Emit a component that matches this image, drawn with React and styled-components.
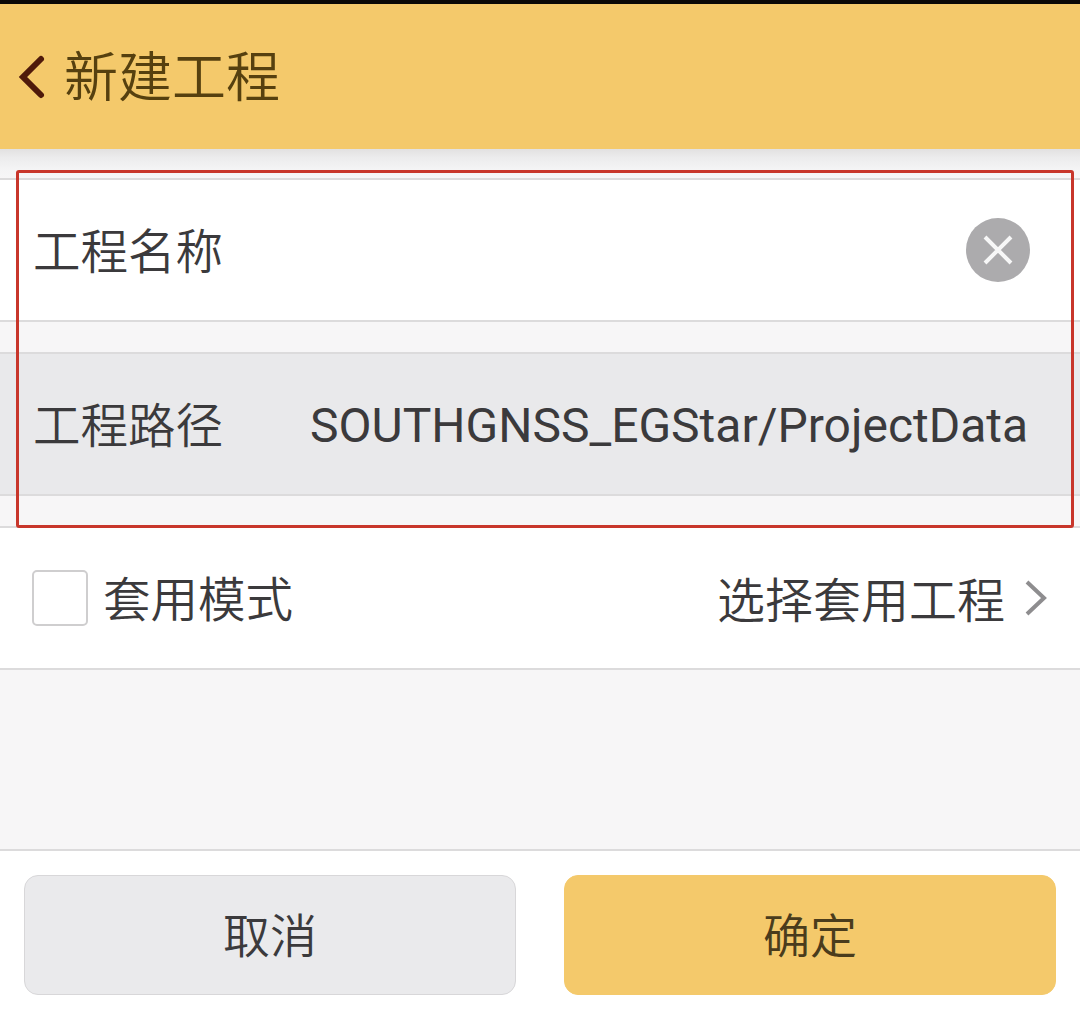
import React from "react";
import styled, { createGlobalStyle } from "styled-components";

const Global = createGlobalStyle`
  html, body { margin: 0; padding: 0; background: #f7f6f7; }
  * { box-sizing: border-box; }
`;
const FONT = `"Noto Sans CJK SC", "Noto Sans", sans-serif`;

const Page = styled.div`
  position: relative;
  width: 1080px;
  height: 1011px;
  display: flex;
  flex-direction: column;
  overflow: hidden;
  background: #f7f6f7;
  font-family: ${FONT};
  font-weight: 350;
  color: #3b3a3c;
`;
const StatusEdge = styled.div`
  height: 4px;
  flex: none;
  background: #0a0806;
`;
const Header = styled.header`
  height: 145px;
  flex: none;
  background: #f4c96b;
  display: flex;
  align-items: center;
  padding-left: 18px;
  gap: 16px;
  color: #56400f;
`;
const Title = styled.h1`
  margin: 0 0 5px;
  font-size: 54px;
  line-height: 1;
  font-weight: 350;
`;
const Shade = styled.div`
  height: 29px;
  flex: none;
  background: linear-gradient(#e2e1e1 0%, #ececed 30%, #f4f4f5 70%, #f7f6f7 100%);
`;
const Row = styled.div`
  height: 144px;
  flex: none;
  display: flex;
  align-items: center;
  background: ${(p) => p.$bg};
  border-top: 2px solid #dcdbdc;
  border-bottom: 2px solid #dcdbdc;
  padding: ${(p) => p.$pad};
`;
const Gap = styled.div`
  height: 30px;
  flex: none;
`;
const Label = styled.span`
  font-size: 47.5px;
  line-height: 1;
  white-space: nowrap;
  margin-bottom: 3px;
`;
const PickLabel = styled(Label)`
  font-size: 48px;
`;
const PathText = styled.span`
  font-family: Roboto, "Noto Sans", sans-serif;
  font-weight: 400;
  font-size: 48px;
  line-height: 1;
  margin-left: 87px;
  margin-top: 4px;
  white-space: nowrap;
`;
const Clear = styled.span`
  margin-left: auto;
  width: 64px;
  height: 64px;
  flex: none;
  border-radius: 50%;
  background: #acabad;
  display: flex;
  align-items: center;
  justify-content: center;
`;
const Check = styled.span`
  width: 56px;
  height: 56px;
  flex: none;
  background: #fff;
  border: 2px solid #cfcecf;
  border-radius: 5px;
  margin-right: 15px;
`;
const Pick = styled.span`
  margin-left: auto;
  display: flex;
  align-items: center;
  gap: 19px;
`;
const Spacer = styled.div`
  flex: 1;
`;
const Footer = styled.footer`
  height: 162px;
  flex: none;
  background: #fff;
  border-top: 2px solid #dcdbdc;
  display: flex;
  gap: 48px;
  padding: 24px 24px 16px;
`;
const Button = styled.div`
  flex: 1;
  height: 120px;
  border-radius: 14px;
  display: flex;
  align-items: center;
  justify-content: center;
  font-size: 47px;
  padding-bottom: 6px;
  background: ${(p) => (p.$primary ? "#f4c96b" : "#eaeaec")};
  border: 1px solid ${(p) => (p.$primary ? "#f4c96b" : "#d8d7d9")};
  color: ${(p) => (p.$primary ? "#4a3c1c" : "#3b3a3c")};
`;
const Highlight = styled.div`
  position: absolute;
  left: 16px;
  top: 170px;
  width: 1058px;
  height: 358px;
  border: 3px solid #c8362b;
  border-radius: 3px;
  pointer-events: none;
`;

export default function App() {
  return (
    <Page>
      <Global />
      <StatusEdge />
      <Header>
        <svg width="30" height="48" viewBox="0 0 30 48" fill="none">
          <path d="M23 6 L5 24 L23 42" stroke="#4f1a0a" strokeWidth="6" strokeLinecap="round" strokeLinejoin="miter" />
        </svg>
        <Title>新建工程</Title>
      </Header>
      <Shade />
      <Row $bg="#ffffff" $pad="0 50px 0 33px">
        <Label>工程名称</Label>
        <Clear>
          <svg width="32" height="32" viewBox="0 0 32 32" fill="none">
            <path d="M3 3 L29 29 M29 3 L3 29" stroke="#f7f7f7" strokeWidth="4" />
          </svg>
        </Clear>
      </Row>
      <Gap />
      <Row $bg="#e9e9eb" $pad="0 0 0 33px">
        <Label>工程路径</Label>
        <PathText>SOUTHGNSS_EGStar/ProjectData</PathText>
      </Row>
      <Gap />
      <Row $bg="#ffffff" $pad="0 32px 0 32px">
        <Check />
        <Label>套用模式</Label>
        <Pick>
          <PickLabel>选择套用工程</PickLabel>
          <svg width="24" height="38" viewBox="0 0 24 38" fill="none">
            <path d="M3 3 L20 19 L3 35" stroke="#8e8d8f" strokeWidth="4" />
          </svg>
        </Pick>
      </Row>
      <Spacer />
      <Footer>
        <Button>取消</Button>
        <Button $primary>确定</Button>
      </Footer>
      <Highlight />
    </Page>
  );
}
